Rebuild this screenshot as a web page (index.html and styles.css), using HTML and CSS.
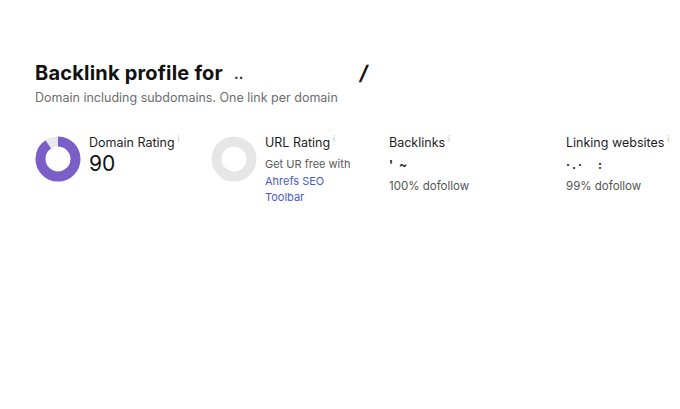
FILE: index.html
```html
<!DOCTYPE html>
<html>
<head>
<meta charset="utf-8">
<link rel="stylesheet" href="styles.css">
</head>
<body>
<div class="page">
  <h1 class="title">Backlink profile for <span class="mask-dots">..</span><span class="mask-slash">/</span></h1>
  <p class="subtitle">Domain including subdomains. One link per domain</p>

  <div class="metrics">
    <div class="metric">
      <svg class="donut" viewBox="0 0 46 46" width="46" height="46">
        <circle cx="23" cy="23" r="17.5" fill="none" stroke="#e8e8ec" stroke-width="10"/>
        <circle cx="23" cy="23" r="17.5" fill="none" stroke="#7a5fc8" stroke-width="10"
          stroke-dasharray="98.96 110" transform="rotate(-90 23 23)"/>
      </svg>
      <div class="info">
        <div class="label">Domain Rating<sup class="i">i</sup></div>
        <div class="big">90</div>
      </div>
    </div>

    <div class="metric">
      <svg class="donut" viewBox="0 0 46 46" width="46" height="46">
        <circle cx="23" cy="23" r="17.5" fill="none" stroke="#e6e6e6" stroke-width="10"/>
      </svg>
      <div class="info">
        <div class="label">URL Rating<sup class="i">i</sup></div>
        <div class="note">Get UR free with<br><span class="link">Ahrefs SEO<br>Toolbar</span></div>
      </div>
    </div>

    <div class="metric">
      <div class="info">
        <div class="label">Backlinks<sup class="i">i</sup></div>
        <div class="masked"><span class="m1">'</span><span class="m2">~</span></div>
        <div class="sub">100% dofollow</div>
      </div>
    </div>

    <div class="metric">
      <div class="info">
        <div class="label">Linking websites<sup class="i">i</sup></div>
        <div class="masked"><span class="m3">·.·</span><span class="m4">:</span></div>
        <div class="sub">99% dofollow</div>
      </div>
    </div>
  </div>
</div>
</body>
</html>
```

FILE: styles.css
```css
html, body {
  margin: 0;
  padding: 0;
  background: #ffffff;
}

body {
  font-family: Inter, "Liberation Sans", sans-serif;
  color: #1d1d1f;
}

.page {
  padding: 61px 0 0 35px;
}

.title {
  margin: 0;
  font-size: 20px;
  line-height: 25px;
  font-weight: 700;
  color: #111;
  letter-spacing: 0.2px;
}

.mask-dots {
  display: inline-block;
  margin-left: 6px;
  font-size: 14px;
  vertical-align: 1px;
}

.mask-slash {
  display: inline-block;
  margin-left: 116px;
  font-weight: 700;
  transform: skewX(-10deg);
}

.subtitle {
  margin: 3px 0 0 0;
  font-size: 12.5px;
  line-height: 18px;
  color: #6d6d6d;
}

.metrics {
  display: grid;
  grid-template-columns: 176px 178px 177px auto;
  margin-top: 28px;
}

.metric {
  display: flex;
  align-items: flex-start;
  gap: 8px;
}

.donut {
  flex: none;
  display: block;
  margin-top: 1px;
}

.info {
  display: flex;
  flex-direction: column;
}

.label {
  font-size: 12.5px;
  line-height: 16px;
  color: #1d1d1f;
}

.i {
  font-size: 8px;
  color: #b8b8b8;
  margin-left: 3px;
  vertical-align: 5px;
  line-height: 0;
}

.big {
  font-size: 21px;
  line-height: 26px;
  color: #111;
}

.note {
  font-size: 11px;
  line-height: 16.5px;
  color: #5a5a5a;
  margin-top: 5px;
}

.link {
  color: #4a5cc2;
}

.masked {
  height: 27px;
  font-size: 12px;
  line-height: 27px;
  color: #222;
  font-weight: 700;
}

.m1 { margin-right: 6px; }
.m3 { letter-spacing: 2px; }
.m4 { margin-left: 14px; }

.sub {
  font-size: 11.5px;
  line-height: 16px;
  color: #555;
}
```
